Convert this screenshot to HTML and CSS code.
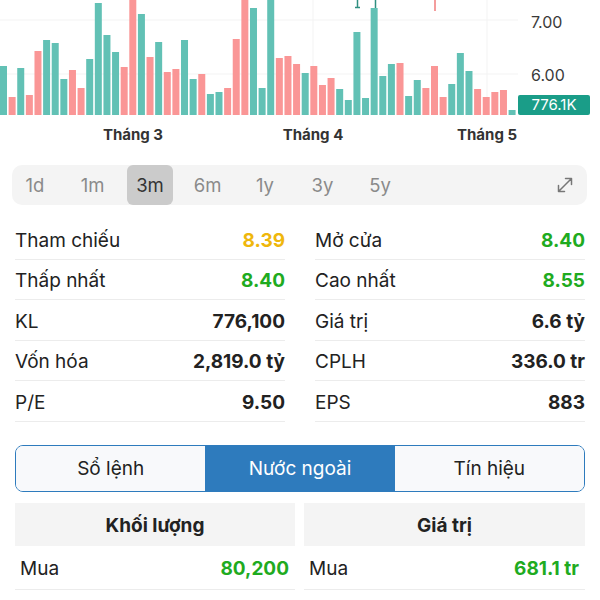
FILE: index.html
```html
<!DOCTYPE html>
<html lang="vi">
<head>
  <meta charset="UTF-8" />
  <title>Chi tiết mã</title>
  <link rel="stylesheet" href="styles.css">
</head>
<body>

<div class="chart">
  <svg id="volume" class="plot" width="518" height="150" viewBox="0 0 518 150">
    <g class="grid">
      <line x1="0" y1="20" x2="518" y2="20" />
      <line x1="0" y1="74" x2="518" y2="74" />
      <line x1="133" y1="0" x2="133" y2="115" />
      <line x1="313" y1="0" x2="313" y2="115" />
      <line x1="487" y1="0" x2="487" y2="115" />
    </g>
    <g id="bars"></g>
    <g class="wick up">
      <line x1="357.5" y1="0" x2="357.5" y2="8" />
      <line x1="355" y1="7.5" x2="360" y2="7.5" />
      <line x1="375.5" y1="0" x2="375.5" y2="8" />
    </g>
    <g class="wick down">
      <line x1="435" y1="0" x2="435" y2="11" />
    </g>
    <g class="months">
      <text x="133" y="140">Tháng 3</text>
      <text x="313" y="140">Tháng 4</text>
      <text x="487" y="140">Tháng 5</text>
    </g>
  </svg>
  <div class="axis">
    <span class="tick">7.00</span>
    <span class="tick tick-low">6.00</span>
    <span class="badge">776.1K</span>
  </div>
</div>

<div class="periods">
  <span class="period">1d</span>
  <span class="period">1m</span>
  <span class="period active">3m</span>
  <span class="period">6m</span>
  <span class="period">1y</span>
  <span class="period">3y</span>
  <span class="period">5y</span>
  <svg class="expand" width="20" height="20" viewBox="0 0 20 20">
    <path d="M3.5 16.5 L16.5 3.5 M10.5 3.5 H16.5 V9.5 M3.5 10.5 V16.5 H9.5" />
  </svg>
</div>

<div class="stats">
  <div class="stat"><span>Tham chiếu</span><b class="ref">8.39</b></div>
  <div class="stat"><span>Mở cửa</span><b class="up">8.40</b></div>
  <div class="stat"><span>Thấp nhất</span><b class="up">8.40</b></div>
  <div class="stat"><span>Cao nhất</span><b class="up">8.55</b></div>
  <div class="stat"><span>KL</span><b>776,100</b></div>
  <div class="stat"><span>Giá trị</span><b>6.6 tỷ</b></div>
  <div class="stat"><span>Vốn hóa</span><b>2,819.0 tỷ</b></div>
  <div class="stat"><span>CPLH</span><b>336.0 tr</b></div>
  <div class="stat"><span>P/E</span><b>9.50</b></div>
  <div class="stat"><span>EPS</span><b>883</b></div>
</div>

<div class="tabs">
  <div class="tab">Sổ lệnh</div>
  <div class="tab active">Nước ngoài</div>
  <div class="tab">Tín hiệu</div>
</div>

<div class="foreign">
  <div class="column">
    <div class="head">Khối lượng</div>
    <div class="line"><span>Mua</span><b class="up">80,200</b></div>
  </div>
  <div class="column">
    <div class="head">Giá trị</div>
    <div class="line"><span>Mua</span><b class="up">681.1 tr</b></div>
  </div>
</div>

<script>
  // top of each volume bar (bottom is 115), t = tăng, g = giảm
  const volumes = [
    [66,'t'],[97,'g'],[68,'t'],[95,'g'],[51,'g'],[40,'t'],[43,'t'],[79,'t'],[70,'g'],[88,'g'],
    [59,'t'],[3,'t'],[35,'t'],[52,'t'],[67,'g'],[0,'g'],[14,'t'],[57,'g'],[42,'t'],[72,'g'],
    [69,'g'],[40,'t'],[79,'t'],[74,'g'],[94,'t'],[92,'t'],[88,'g'],[39,'g'],[0,'g'],[8,'t'],
    [88,'t'],[0,'t'],[58,'g'],[56,'g'],[64,'g'],[73,'t'],[66,'g'],[85,'g'],[78,'g'],[89,'t'],
    [100,'t'],[32,'t'],[98,'t'],[8,'t'],[76,'t'],[64,'t'],[63,'g'],[96,'t'],[80,'t'],[88,'g'],
    [66,'g'],[97,'g'],[84,'t'],[53,'t'],[71,'t'],[89,'g'],[97,'g'],[92,'g'],[90,'g'],[110,'t']
  ];

  const bars = document.getElementById('bars');
  volumes.forEach(([top, dir], i) => {
    const rect = document.createElementNS('http://www.w3.org/2000/svg', 'rect');
    rect.setAttribute('x', (i * 8.62).toFixed(2));
    rect.setAttribute('y', top);
    rect.setAttribute('width', 7);
    rect.setAttribute('height', 115 - top);
    rect.setAttribute('class', dir === 't' ? 'bar-up' : 'bar-down');
    bars.appendChild(rect);
  });
</script>

</body>
</html>
```

FILE: styles.css
```css
:root {
  --teal: #62c1b5;
  --pink: #fa9696;
  --green: #1fab1f;
  --yellow: #efb70c;
  --blue: #2e7bbd;
  --text: #222;
  --line: #ececec;
}

body {
  margin: 0;
  font-family: 'Inter', 'Liberation Sans', sans-serif;
  color: var(--text);
  background: white;
  overflow: hidden;
}

/* Volume chart */
.chart {
  display: flex;
  height: 150px;
}

.plot {
  display: block;
  flex: none;
}

.grid line {
  stroke: #f3f3f3;
  stroke-width: 1;
}

.bar-up {
  fill: var(--teal);
}

.bar-down {
  fill: var(--pink);
}

.wick line {
  stroke-width: 1.5;
}

.wick.up line {
  stroke: #2f8f80;
}

.wick.down line {
  stroke: #f07d7d;
}

.months text {
  font-size: 15px;
  font-weight: 700;
  fill: #333;
  text-anchor: middle;
}

.axis {
  display: flex;
  flex-direction: column;
  align-items: flex-start;
  padding-top: 12px;
  width: 82px;
}

.tick {
  font-size: 16px;
  line-height: 20px;
  color: #3a3a3a;
  padding-left: 13px;
}

.tick-low {
  margin-top: 33px;
}

.badge {
  margin-top: 10px;
  width: 72px;
  height: 20px;
  line-height: 20px;
  text-align: center;
  font-size: 15px;
  color: white;
  background: #1a9d88;
  border-radius: 2px;
}

/* Period selector */
.periods {
  display: flex;
  align-items: center;
  gap: 11.5px;
  height: 40px;
  margin: 15px 13px 0 12px;
  background: #f4f4f4;
  border-radius: 10px;
}

.period {
  width: 46px;
  height: 40px;
  line-height: 40px;
  text-align: center;
  font-size: 18.5px;
  color: #8a8a8a;
  border-radius: 6px;
}

.period.active {
  background: #cbcbcb;
  color: #333;
}

.expand {
  margin-left: auto;
  margin-right: 12px;
}

.expand path {
  fill: none;
  stroke: #777;
  stroke-width: 1.5;
  stroke-linecap: round;
  stroke-linejoin: round;
}

/* Price stats */
.stats {
  display: grid;
  grid-template-columns: 1fr 1fr;
  column-gap: 30px;
  margin: 14px 15px 0;
}

.stat {
  display: flex;
  justify-content: space-between;
  align-items: center;
  box-sizing: border-box;
  height: 40.5px;
  padding-top: 3px;
  border-bottom: 1px solid var(--line);
  font-size: 19px;
}

.stat b {
  font-weight: 700;
}

.ref {
  color: var(--yellow);
}

.up {
  color: var(--green);
}

/* Tabs */
.tabs {
  display: grid;
  grid-template-columns: repeat(3, 1fr);
  height: 47px;
  margin: 23px 15px 0;
  border: 1.5px solid var(--blue);
  border-radius: 8px;
  overflow: hidden;
  box-sizing: border-box;
}

.tab {
  display: flex;
  align-items: center;
  justify-content: center;
  font-size: 19px;
  background: #f8f9fb;
}

.tab.active {
  background: var(--blue);
  color: white;
}

/* Foreign trading */
.foreign {
  display: grid;
  grid-template-columns: 280px 281px;
  column-gap: 9px;
  margin: 11px 15px 0;
}

.head {
  height: 43px;
  line-height: 45px;
  text-align: center;
  font-size: 19px;
  font-weight: 700;
  background: #f4f4f4;
}

.line {
  display: flex;
  justify-content: space-between;
  align-items: center;
  box-sizing: border-box;
  height: 44px;
  padding: 3px 6px 0 5px;
  border-bottom: 1px solid var(--line);
  font-size: 19px;
}
```
